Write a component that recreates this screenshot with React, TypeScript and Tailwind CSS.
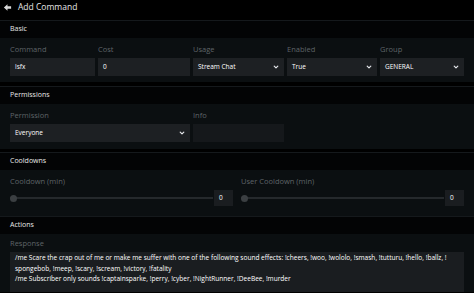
import React from "react";

const font = { fontFamily: '"Open Sans", "Noto Sans", sans-serif' };

function Chevron() {
  return (
    <svg viewBox="0 0 10 10" className="h-[6px] w-[6px]" fill="none">
      <path d="M2 3.5 5 6.5 8 3.5" stroke="#e5e7eb" strokeWidth="2" strokeLinecap="round" strokeLinejoin="round" />
    </svg>
  );
}

function Section({ title, children }: { title: string; children: React.ReactNode }) {
  return (
    <div className="border-t border-[#15191c]">
      <div className="bg-[#030405] px-[10px] h-[17px] flex items-center text-[7px] text-[#e8e8e8]">{title}</div>
      <div className="bg-[#0b0f11] px-[10px]">{children}</div>
    </div>
  );
}

function Field({ label, children, className = "", h = "h-[20px]" }: { label: string; children: React.ReactNode; className?: string; h?: string }) {
  return (
    <div className={className}>
      <div className={`${h} flex items-end pb-[3px] text-[7.5px] text-[#5f6468]`}>{label}</div>
      {children}
    </div>
  );
}

function Box({ value, select }: { value: string; select?: boolean }) {
  return (
    <div className="h-[18px] bg-[#1d2023] flex items-center justify-between px-[5px] text-[6.5px] text-white">
      <span>{value}</span>
      {select && <Chevron />}
    </div>
  );
}

function Slider() {
  return (
    <div className="flex items-center gap-[1px]">
      <div className="relative flex-1 h-[16px] flex items-center">
        <div className="w-full h-[2px] bg-[#25292c]" />
        <div className="absolute left-[0px] w-[7px] h-[7px] rounded-full bg-[#3b3f42]" />
      </div>
      <div className="w-[19px] h-[16px] bg-[#1a1d20] flex items-center px-[5px] text-[6.5px] text-white">0</div>
    </div>
  );
}

export default function App() {
  return (
    <div className="w-[474px] h-[293px] bg-black overflow-hidden" style={font}>
      <div className="h-[20px] flex items-start pt-[2px] pl-[3px] gap-[6px]">
        <svg viewBox="0 0 10 10" className="w-[9px] h-[9px] mt-[0.5px]">
          <path d="M1 5 5 1.5V3.5H9V6.5H5V8.5Z" fill="#d9d9d9" />
        </svg>
        <span className="text-[8.5px] text-[#e6e6e6] leading-[10px]">Add Command</span>
      </div>

      <Section title="Basic">
        <div className="grid grid-cols-[85px_92px_91px_90px_1fr] gap-[3px] pb-[6px]">
          <Field label="Command"><Box value="lsfx" /></Field>
          <Field label="Cost"><Box value="0" /></Field>
          <Field label="Usage"><Box value="Stream Chat" select /></Field>
          <Field label="Enabled"><Box value="True" select /></Field>
          <Field label="Group"><Box value="GENERAL" select /></Field>
        </div>
      </Section>

      <div className="h-[4px]" />
      <Section title="Permissions">
        <div className="grid grid-cols-[180px_91px] gap-[3px] pb-[7px]">
          <Field label="Permission"><Box value="Everyone" select /></Field>
          <Field label="Info"><div className="h-[18px] bg-[#15181b]" /></Field>
        </div>
      </Section>

      <div className="h-[3px]" />
      <Section title="Cooldowns">
        <div className="grid grid-cols-2 gap-[8px] pb-[10px]">
          <Field label="Cooldown (min)"><Slider /></Field>
          <Field label="User Cooldown (min)"><Slider /></Field>
        </div>
      </Section>

      <Section title="Actions">
        <Field label="Response" h="h-[18px]">
          <div className="bg-[#1a1d20] px-[5px] pt-[1px] pb-[4px] text-[6.55px] leading-[10.5px] text-white h-[40px]">
            <div>/me Scare the crap out of me or make me suffer with one of the following sound effects: !cheers, !woo, !wololo, !smash, !tutturu, !hello, !ballz, !</div>
            <div>spongebob, !meep, !scary, !scream, !victory, !fatality</div>
            <div>/me Subscriber only sounds !captainsparke, !perry, !cyber, !NightRunner, !DeeBee, !murder</div>
          </div>
        </Field>
      </Section>
    </div>
  );
}
